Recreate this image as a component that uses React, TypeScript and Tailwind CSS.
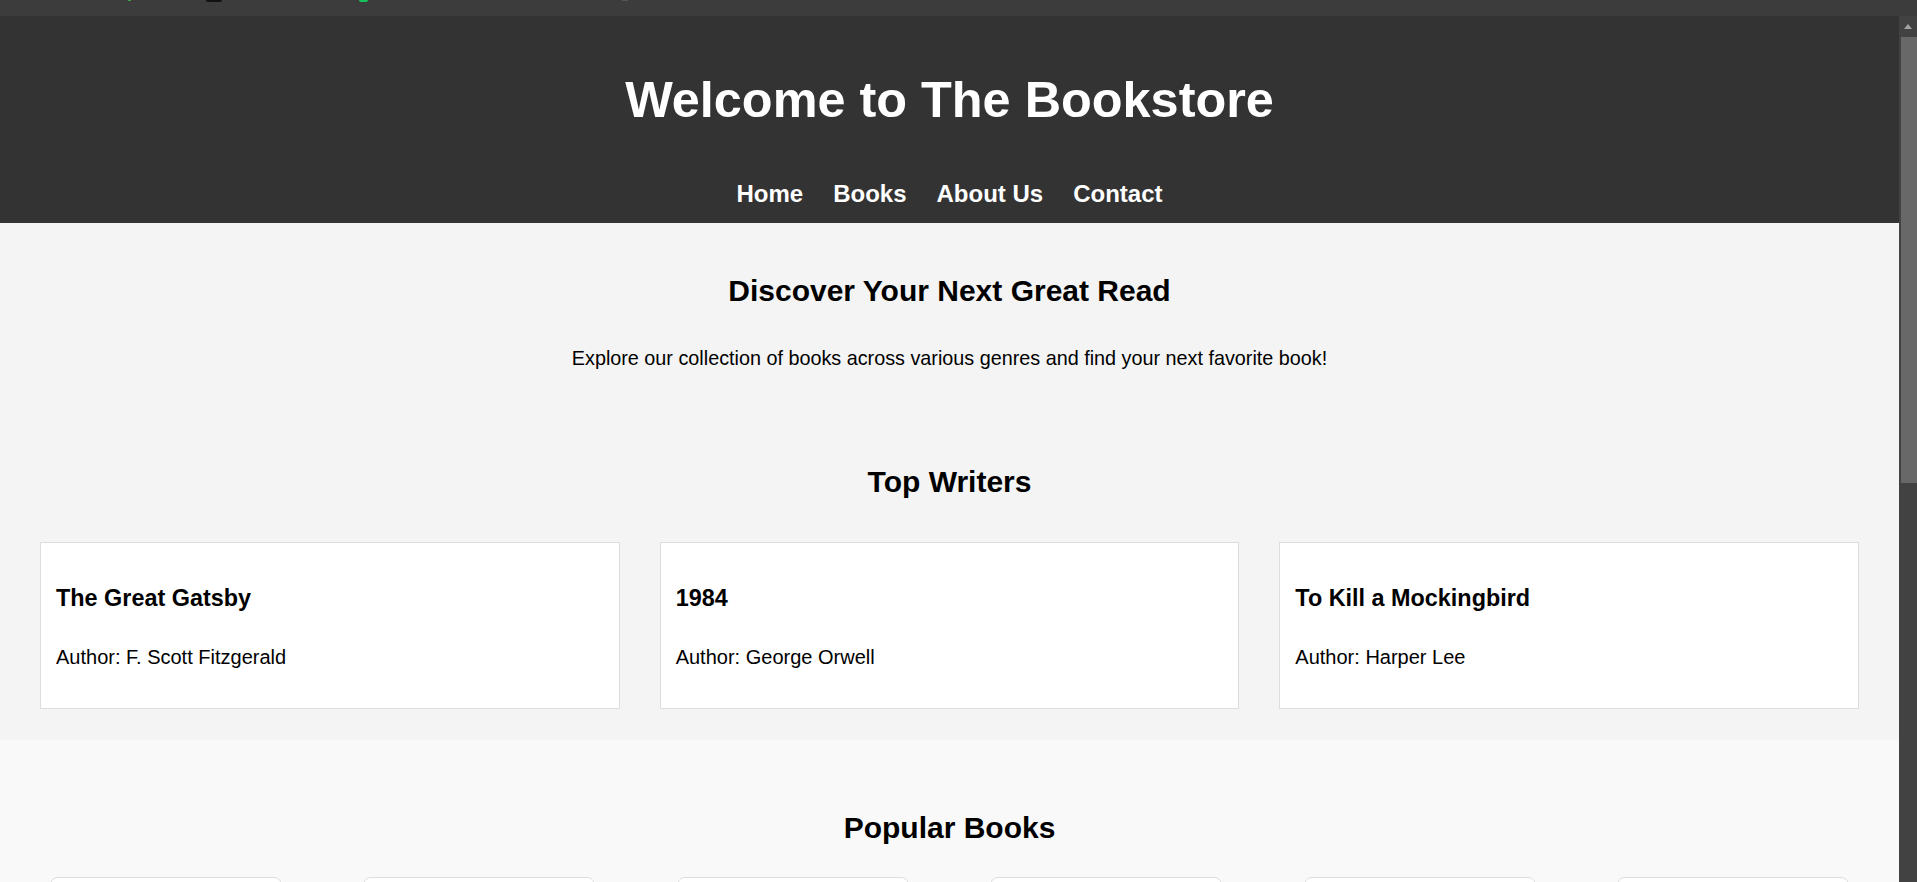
import React from "react";

const writers = [
  { title: "The Great Gatsby", author: "F. Scott Fitzgerald" },
  { title: "1984", author: "George Orwell" },
  { title: "To Kill a Mockingbird", author: "Harper Lee" },
];

const popular = [
  "Pride and Prejudice",
  "The Catcher in the Rye",
  "Moby Dick",
  "War and Peace",
  "The Hobbit",
  "Brave New World",
];

export default function App() {
  return (
    <div
      className="flex h-[882px] w-[1917px] flex-col overflow-hidden bg-[#3c3c3c] text-black"
      style={{ fontFamily: '"Liberation Sans", Arial, sans-serif' }}
    >
      {/* browser strip */}
      <div className="flex h-[16px] shrink-0 items-start bg-[#3c3c3c]">
        <div className="ml-[128px] h-[1px] w-[3px] bg-[#3fa34d]" />
        <div className="ml-[75px] h-[2px] w-[16px] rounded-b bg-[#111]" />
        <div className="ml-[137px] h-[2px] w-[9px] rounded-b bg-[#16c35a]" />
        <div className="ml-[254px] h-[1px] w-[6px] bg-[#555]" />
      </div>

      <div className="flex min-h-0 flex-1">
        <div className="min-w-0 flex-1 overflow-hidden bg-[#f4f4f4]">
          {/* Header */}
          <header className="bg-[#333333] pt-[55px] pb-[15px] text-center text-white">
            <h1 className="text-[50.4px] leading-[57px] font-bold">Welcome to The Bookstore</h1>
            <nav className="mt-[52px] flex justify-center gap-[30px] text-[24px] leading-[28px] font-bold">
              <a href="#">Home</a>
              <a href="#">Books</a>
              <a href="#">About Us</a>
              <a href="#">Contact</a>
            </nav>
          </header>

          {/* Intro + top writers */}
          <section className="bg-[#f4f4f4] pt-[51px] pb-[31px]">
            <div className="text-center">
              <h2 className="text-[30px] leading-[34px] font-bold">Discover Your Next Great Read</h2>
              <p className="mt-[39px] text-[19.8px] leading-[23px]">
                Explore our collection of books across various genres and find your next favorite book!
              </p>
              <h2 className="mt-[95px] text-[30px] leading-[34px] font-bold">Top Writers</h2>
            </div>

            <div className="mt-[43px] grid grid-cols-3 gap-[40px] px-[40px]">
              {writers.map((w) => (
                <div key={w.title} className="border border-[#dddddd] bg-white px-[15px] pt-[42px] pb-[39px]">
                  <h3 className="text-[23.4px] leading-[27px] font-bold">{w.title}</h3>
                  <p className="mt-[34px] text-[20px] leading-[23px]">Author: {w.author}</p>
                </div>
              ))}
            </div>
          </section>

          {/* Popular books */}
          <section className="bg-[#f9f9f9] pt-[71px] pb-[40px]">
            <h2 className="text-center text-[30px] leading-[34px] font-bold">Popular Books</h2>
            <div className="mt-[32px] flex justify-between px-[50px]">
              {popular.map((b) => (
                <div key={b} className="h-[300px] w-[232px] rounded-[8px] border border-[#dddddd] bg-white p-[15px]">
                  <div className="h-[180px] rounded bg-[#eeeeee]" />
                  <p className="mt-[10px] text-[18px] font-bold">{b}</p>
                </div>
              ))}
            </div>
          </section>
        </div>

        {/* scrollbar */}
        <div className="flex w-[18px] shrink-0 flex-col items-center bg-[#424242]">
          <div className="flex h-[21px] items-center justify-center">
            <svg width="8" height="5" viewBox="0 0 8 5">
              <polygon points="4,0 8,5 0,5" fill="#a3a3a3" />
            </svg>
          </div>
          <div className="ml-[2px] h-[446px] w-[16px] bg-[#686868]" />
        </div>
      </div>
    </div>
  );
}
